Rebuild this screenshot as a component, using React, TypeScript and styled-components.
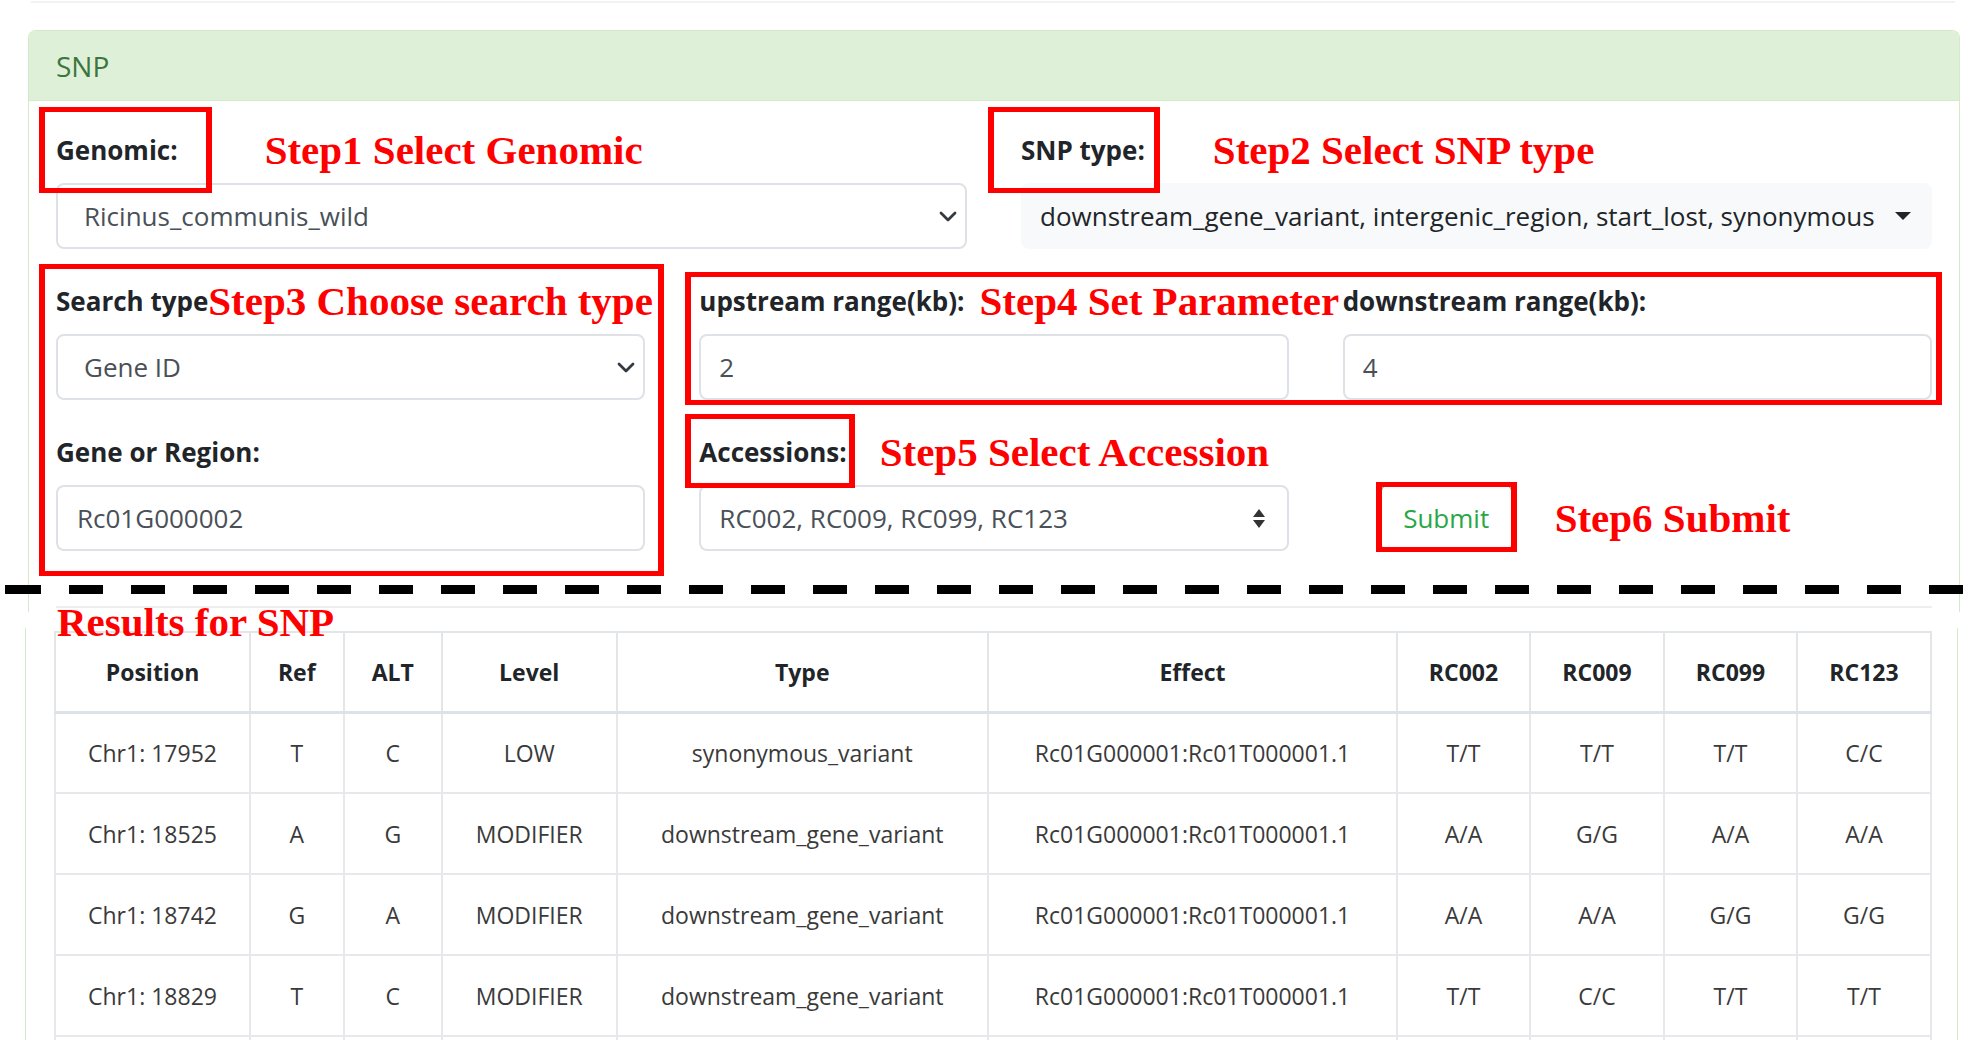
import React from 'react';
import styled, { createGlobalStyle } from 'styled-components';

const GlobalStyle = createGlobalStyle`
  html, body { margin: 0; padding: 0; background: #fff; }
  body {
    font-family: "Open Sans", "Noto Sans", sans-serif;
    color: #212529;
    overflow: hidden;
  }
  * { box-sizing: border-box; }
`;

const Page = styled.div`
  position: relative;
  width: 1986px;
  height: 1040px;
  overflow: hidden;
  padding-top: 1px;
`;

const TopRule = styled.div`
  height: 2px;
  margin: 0 31px;
  background: #f0f2f3;
`;

const Card = styled.section`
  margin: 27px 0 0 28px;
  width: 1932px;
  border: 1px solid #d6e9c6;
  border-bottom: none;
  border-radius: 8px 8px 0 0;
`;

const CardHeader = styled.div`
  display: flex;
  align-items: center;
  height: 70px;
  padding-left: 27px;
  background: #dff0d8;
  border-bottom: 1px solid #d6e9c6;
  border-radius: 7px 7px 0 0;
  color: #3c763d;
  font-size: 28px;
`;

const CardBody = styled.div`
  padding: 29px 27px 4px 27px;
`;

const TopGrid = styled.div`
  display: grid;
  grid-template-columns: repeat(2, minmax(0, 1fr));
  column-gap: 54px;
`;

const BottomGrid = styled.div`
  display: grid;
  grid-template-columns: repeat(3, minmax(0, 1fr));
  grid-template-rows: auto auto;
  column-gap: 54px;
  row-gap: 32px;
  margin-top: 32px;
`;

const Field = styled.div`
  position: relative;
  display: flex;
  flex-direction: column;
  min-width: 0;
`;

const LeftGroup = styled.div`
  position: relative;
  grid-row: 1 / span 2;
  display: flex;
  flex-direction: column;
  gap: 32px;
  min-width: 0;
`;

const LabelRow = styled.div`
  display: flex;
  align-items: center;
  height: 40px;
  margin-bottom: 13px;
  white-space: nowrap;
`;

const Label = styled.label`
  position: relative;
  flex: none;
  height: 40px;
  line-height: 40px;
  font-size: 26px;
  font-weight: 700;
  color: #212529;
`;

const StepNote = styled.span<{ $gap: number }>`
  flex: none;
  height: 40px;
  line-height: 40px;
  margin-left: ${p => p.$gap}px;
  font-family: "Liberation Serif", "Times New Roman", serif;
  font-weight: 700;
  font-size: 41px;
  color: #ff0000;
  white-space: nowrap;
`;

const RedBox = styled.span<{ $t: number; $l: number; $w: number; $h: number }>`
  position: absolute;
  top: ${p => p.$t}px;
  left: ${p => p.$l}px;
  width: ${p => p.$w}px;
  height: ${p => p.$h}px;
  border-style: solid;
  border-color: #ff0000;
  border-width: 5px 6px;
  pointer-events: none;
  z-index: 2;
`;

const Control = styled.div<{ $pl: number; $pr?: number; $soft?: boolean }>`
  position: relative;
  display: flex;
  align-items: center;
  height: 66px;
  padding-left: ${p => p.$pl}px;
  padding-right: ${p => p.$pr ?? 8}px;
  border: 2px solid ${p => (p.$soft ? '#f8f9fa' : '#dee2e6')};
  border-radius: 8px;
  background: ${p => (p.$soft ? '#f8f9fa' : '#fff')};
  color: ${p => (p.$soft ? '#212529' : '#495057')};
  font-size: 26px;
  white-space: nowrap;
`;

const ControlText = styled.span`
  flex: 1;
  min-width: 0;
  overflow: hidden;
`;

const Hr = styled.div`
  height: 2px;
  margin-top: 55px;
  background: #eceef0;
`;

const SubmitCell = styled.div`
  grid-column: 3;
  grid-row: 2;
  display: flex;
  align-items: center;
  align-self: end;
  height: 66px;
  padding-left: 38px;
`;

const ButtonWrap = styled.div`
  position: relative;
  flex: none;
`;

const SubmitButton = styled.button`
  display: block;
  width: 131px;
  height: 66px;
  padding: 0;
  border: 1px solid #28a745;
  border-radius: 6px;
  background: #fff;
  color: #28a745;
  font-family: "Open Sans", "Noto Sans", sans-serif;
  font-size: 26px;
`;

const DashedRule = styled.div`
  position: absolute;
  top: 585px;
  left: 0;
  right: 0;
  height: 9px;
  background: repeating-linear-gradient(to right, #000 0 34px, transparent 34px 62px);
  background-position: 7px 0;
  z-index: 3;
`;

const ResultsPanel = styled.section`
  position: relative;
  margin: 16px 0 0 25px;
  width: 1933px;
  padding: 3px 27px 0 28px;
  border-left: 1px solid #d6e9c6;
  border-right: 1px solid #d6e9c6;
`;

const ResultsTitle = styled.div`
  position: absolute;
  top: -26px;
  left: 31px;
  line-height: 41px;
  font-family: "Liberation Serif", "Times New Roman", serif;
  font-weight: 700;
  font-size: 41px;
  color: #ff0000;
  white-space: nowrap;
  z-index: 2;
`;

const Table = styled.table`
  width: 1876px;
  border-collapse: collapse;
  table-layout: fixed;
  font-size: 23px;
`;

const Col = styled.col<{ $w: number }>`
  width: ${p => p.$w}px;
`;

const Th = styled.th`
  height: 80px;
  padding: 0;
  border: 2px solid #e3e6e9;
  border-bottom: 3px solid #dee2e6;
  font-weight: 700;
  text-align: center;
  vertical-align: middle;
  color: #212529;
`;

const Td = styled.td`
  height: 81px;
  padding: 0;
  border: 2px solid #e6e8eb;
  text-align: center;
  vertical-align: middle;
  color: #3a3a3a;
  white-space: nowrap;
`;

const Chevron = () => (
  <svg width="18" height="11" viewBox="0 0 18 11">
    <path d="M2 2l7 7 7-7" fill="none" stroke="#343a40" strokeWidth="2.8" strokeLinecap="round" strokeLinejoin="round" />
  </svg>
);

const Caret = () => (
  <svg width="16" height="8" viewBox="0 0 16 8">
    <path d="M0 0h16L8 8z" fill="#212529" />
  </svg>
);

const UpDown = () => (
  <svg width="12" height="19" viewBox="0 0 12 19">
    <path d="M6 0L12 8H0z M0 11h12L6 19z" fill="#333" />
  </svg>
);

const widths = [195, 93.5, 98.5, 174.5, 371.5, 409, 133, 134, 133, 134];
const headers = ['Position', 'Ref', 'ALT', 'Level', 'Type', 'Effect', 'RC002', 'RC009', 'RC099', 'RC123'];
const effect = 'Rc01G000001:Rc01T000001.1';
const rows = [
  ['Chr1: 17952', 'T', 'C', 'LOW', 'synonymous_variant', effect, 'T/T', 'T/T', 'T/T', 'C/C'],
  ['Chr1: 18525', 'A', 'G', 'MODIFIER', 'downstream_gene_variant', effect, 'A/A', 'G/G', 'A/A', 'A/A'],
  ['Chr1: 18742', 'G', 'A', 'MODIFIER', 'downstream_gene_variant', effect, 'A/A', 'A/A', 'G/G', 'G/G'],
  ['Chr1: 18829', 'T', 'C', 'MODIFIER', 'downstream_gene_variant', effect, 'T/T', 'C/C', 'T/T', 'T/T'],
  ['\u00a0', '', '', '', '', '', '', '', '', ''],
];

export default function App() {
  return (
    <>
      <GlobalStyle />
      <Page>
        <TopRule />
        <Card>
          <CardHeader>SNP</CardHeader>
          <CardBody>
            <TopGrid>
              <Field>
                <LabelRow>
                  <Label>
                    Genomic:
                    <RedBox $t={-23} $l={-17} $w={173} $h={86} />
                  </Label>
                  <StepNote $gap={87}>Step1 Select Genomic</StepNote>
                </LabelRow>
                <Control $pl={26}>
                  <ControlText>Ricinus_communis_wild</ControlText>
                  <Chevron />
                </Control>
              </Field>
              <Field>
                <LabelRow>
                  <Label>
                    SNP type:
                    <RedBox $t={-23} $l={-33} $w={172} $h={86} />
                  </Label>
                  <StepNote $gap={68}>Step2 Select SNP type</StepNote>
                </LabelRow>
                <Control $pl={17} $pr={19} $soft>
                  <ControlText>downstream_gene_variant, intergenic_region, start_lost, synonymous</ControlText>
                  <Caret />
                </Control>
              </Field>
            </TopGrid>

            <BottomGrid>
              <LeftGroup>
                <RedBox $t={-17} $l={-17} $w={625} $h={312} />
                <Field>
                  <LabelRow>
                    <Label>Search type</Label>
                    <StepNote $gap={0}>Step3 Choose search type</StepNote>
                  </LabelRow>
                  <Control $pl={26}>
                    <ControlText>Gene ID</ControlText>
                    <Chevron />
                  </Control>
                </Field>
                <Field>
                  <LabelRow>
                    <Label>Gene or Region:</Label>
                  </LabelRow>
                  <Control $pl={19}>
                    <ControlText>Rc01G000002</ControlText>
                  </Control>
                </Field>
              </LeftGroup>

              <Field>
                <RedBox $t={-9} $l={-14} $w={1257} $h={133} />
                <LabelRow>
                  <Label>upstream range(kb):</Label>
                  <StepNote $gap={15}>Step4 Set Parameter</StepNote>
                </LabelRow>
                <Control $pl={18}>
                  <ControlText>2</ControlText>
                </Control>
              </Field>

              <Field>
                <LabelRow>
                  <Label>downstream range(kb):</Label>
                </LabelRow>
                <Control $pl={18}>
                  <ControlText>4</ControlText>
                </Control>
              </Field>

              <Field>
                <LabelRow>
                  <Label>
                    Accessions:
                    <RedBox $t={-18} $l={-14} $w={170} $h={74} />
                  </Label>
                  <StepNote $gap={33}>Step5 Select Accession</StepNote>
                </LabelRow>
                <Control $pl={18} $pr={22}>
                  <ControlText>RC002, RC009, RC099, RC123</ControlText>
                  <UpDown />
                </Control>
              </Field>

              <SubmitCell>
                <ButtonWrap>
                  <SubmitButton type="button">Submit</SubmitButton>
                  <RedBox $t={-3} $l={-5} $w={141} $h={70} />
                </ButtonWrap>
                <StepNote $gap={43}>Step6 Submit</StepNote>
              </SubmitCell>
            </BottomGrid>
            <Hr />
          </CardBody>
        </Card>

        <ResultsPanel>
          <ResultsTitle>Results for SNP</ResultsTitle>
          <Table>
            <colgroup>
              {widths.map((w, i) => (
                <Col key={i} $w={w} />
              ))}
            </colgroup>
            <thead>
              <tr>
                {headers.map(h => (
                  <Th key={h}>{h}</Th>
                ))}
              </tr>
            </thead>
            <tbody>
              {rows.map((r, i) => (
                <tr key={i}>
                  {r.map((c, j) => (
                    <Td key={j}>{c}</Td>
                  ))}
                </tr>
              ))}
            </tbody>
          </Table>
        </ResultsPanel>

        <DashedRule />
      </Page>
    </>
  );
}
